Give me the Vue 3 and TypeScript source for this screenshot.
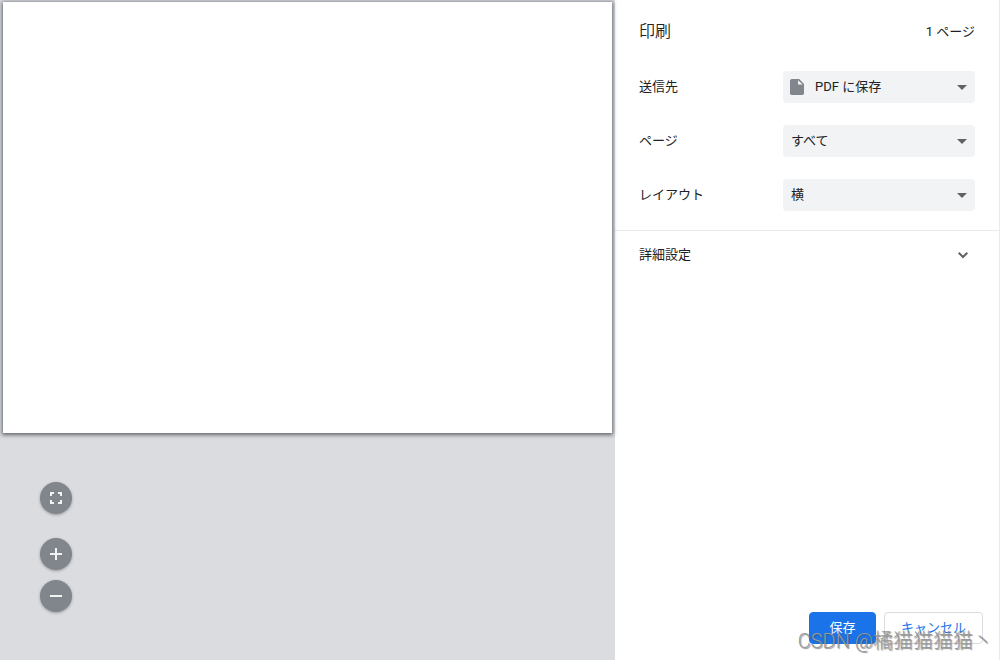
<script setup lang="ts">
import { ref } from 'vue'

interface Setting {
  id: string
  label: string
  options: string[]
  value: string
  icon?: boolean
}

const settings = ref<Setting[]>([
  { id: 'destination', label: '送信先', options: ['PDF に保存'], value: 'PDF に保存', icon: true },
  { id: 'pages', label: 'ページ', options: ['すべて', 'カスタム'], value: 'すべて' },
  { id: 'layout', label: 'レイアウト', options: ['縦', '横'], value: '横' },
])

const expanded = ref(false)
</script>

<template>
  <div class="dialog">
    <main class="preview">
      <div class="sheet"></div>
      <div class="zoom">
        <button type="button" class="round fit" aria-label="ページに合わせる">
          <svg viewBox="0 0 16 16" width="16" height="16">
            <path d="M3 6V3h3M10 3h3v3M13 10v3h-3M6 13H3v-3" />
          </svg>
        </button>
        <button type="button" class="round" aria-label="拡大">
          <svg viewBox="0 0 16 16" width="16" height="16"><path d="M2 8h12M8 2v12" /></svg>
        </button>
        <button type="button" class="round" aria-label="縮小">
          <svg viewBox="0 0 16 16" width="16" height="16"><path d="M2 8h12" /></svg>
        </button>
      </div>
    </main>

    <aside class="sidebar">
      <header class="header">
        <h1>印刷</h1>
        <span>1 ページ</span>
      </header>

      <section class="settings">
        <div v-for="item in settings" :key="item.id" class="row">
          <label :for="item.id">{{ item.label }}</label>
          <div class="field">
            <svg v-if="item.icon" class="file" viewBox="0 0 20 20" width="20" height="20">
              <path d="M5 2h7.200l4.800 4.900V16.200A1.800 1.800 0 0 1 15.200 18H4.800A1.800 1.800 0 0 1 3 16.200V3.800A1.800 1.800 0 0 1 4.800 2z" />
              <path class="fold" d="M11 3.300v4.200h4.700z" />
            </svg>
            <select :id="item.id" v-model="item.value" :class="{ 'with-icon': item.icon }">
              <option v-for="option in item.options" :key="option">{{ option }}</option>
            </select>
            <svg class="arrow" viewBox="0 0 10 5" width="10" height="5"><path d="M0 0h10L5 5z" /></svg>
          </div>
        </div>
      </section>

      <button type="button" class="more" :aria-expanded="expanded" @click="expanded = !expanded">
        <span>詳細設定</span>
        <svg viewBox="0 0 12 8" width="12" height="8"><path d="M1.700 1.700L6 6l4.300-4.300" /></svg>
      </button>

      <footer class="actions">
        <button type="button" class="save">保存</button>
        <button type="button" class="cancel">キャンセル</button>
        <span class="watermark">CSDN @橘猫猫猫猫丶</span>
      </footer>
    </aside>
  </div>
</template>

<style>
body {
  margin: 0;
}
</style>

<style scoped>
.dialog {
  display: flex;
  min-height: 100vh;
  background: #fff;
  color: #202124;
  font: 13px/20px Roboto, "Noto Sans CJK JP", sans-serif;
}

button,
select {
  margin: 0;
  font: inherit;
  cursor: pointer;
}

.preview {
  position: relative;
  flex: 1;
  min-width: 0;
  box-sizing: border-box;
  padding: 2px 3px;
  background: #dadce0;
}

.sheet {
  aspect-ratio: 609 / 431;
  background: #fff;
  box-shadow: 0 1px 4px 1px rgba(60, 62, 68, 0.75);
}

.zoom {
  position: absolute;
  left: 40px;
  bottom: 48px;
  display: flex;
  flex-direction: column;
  gap: 10px;
}

.round {
  display: flex;
  align-items: center;
  justify-content: center;
  width: 32px;
  height: 32px;
  padding: 0;
  border: 0;
  border-radius: 50%;
  background: #80868b;
  box-shadow: 0 1px 3px rgba(0, 0, 0, 0.3);
}

.round path {
  fill: none;
  stroke: #f1f3f4;
  stroke-width: 2;
}

.fit {
  margin-bottom: 14px;
}

.sidebar {
  display: flex;
  flex-direction: column;
  flex: 0 0 385px;
  box-sizing: border-box;
  border-right: 1px solid #e8eaed;
}

.header {
  display: flex;
  align-items: center;
  justify-content: space-between;
  padding: 21px 24px 8px;
}

h1 {
  margin: 0;
  font-size: 16px;
  font-weight: 350;
  line-height: 22px;
}

.settings {
  display: flex;
  flex-direction: column;
  gap: 22px;
  padding: 20px 24px 19px;
  border-bottom: 1px solid #e8eaed;
}

.row {
  display: flex;
  align-items: center;
  justify-content: space-between;
}

.field {
  position: relative;
  width: 192px;
}

select {
  display: block;
  width: 100%;
  height: 32px;
  padding: 0 24px 0 8px;
  border: 0;
  border-radius: 4px;
  background: #f1f3f4;
  color: #202124;
  appearance: none;
}

.with-icon {
  padding-left: 32px;
}

.file {
  position: absolute;
  left: 4px;
  top: 6px;
  fill: #80868b;
  pointer-events: none;
}

.fold {
  fill: #f1f3f4;
}

.arrow {
  position: absolute;
  right: 8px;
  top: 14px;
  fill: #5f6368;
  pointer-events: none;
}

.more {
  display: flex;
  align-items: center;
  justify-content: space-between;
  height: 48px;
  padding: 0 30px 0 24px;
  border: 0;
  background: none;
  color: inherit;
}

.more path {
  fill: none;
  stroke: #5f6368;
  stroke-width: 2;
}

.actions {
  position: relative;
  display: flex;
  justify-content: flex-end;
  gap: 8px;
  margin-top: auto;
  padding: 16px;
}

.save,
.cancel {
  height: 32px;
  padding: 0 16px;
  border: 1px solid #dadce0;
  border-radius: 4px;
  background: #fff;
  color: #1a73e8;
}

.save {
  width: 67px;
  border-color: #1a73e8;
  background: #1a73e8;
  color: #fff;
}

.watermark {
  position: absolute;
  right: 6px;
  bottom: 5px;
  color: #999;
  font-size: 20px;
  font-weight: 300;
  line-height: 28px;
  white-space: nowrap;
  text-shadow: 1px 1px 1px rgba(70, 70, 70, 0.6);
  pointer-events: none;
}
</style>
